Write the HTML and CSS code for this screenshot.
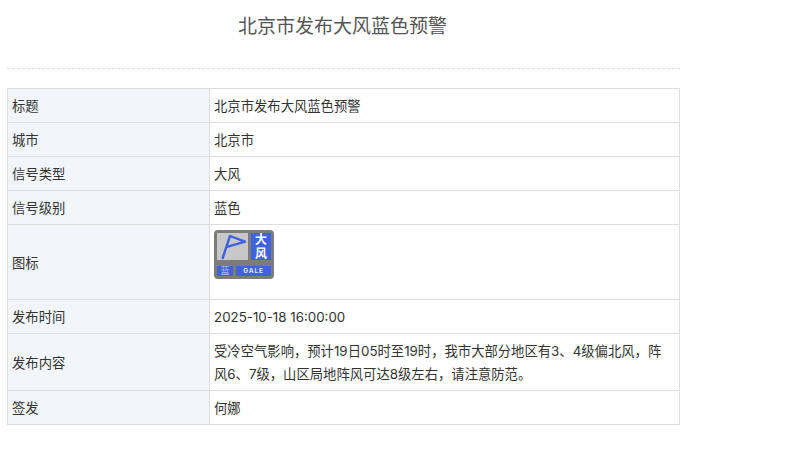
FILE: index.html
```html
<!DOCTYPE html>
<html lang="zh-CN">
<head>
<meta charset="utf-8">
<title>北京市发布大风蓝色预警</title>
<link rel="stylesheet" href="styles.css">
</head>
<body>
<main class="page">
  <h1 class="title">北京市发布大风蓝色预警</h1>
  <table class="info">
    <tr><th>标题</th><td>北京市发布大风蓝色预警</td></tr>
    <tr><th>城市</th><td>北京市</td></tr>
    <tr><th>信号类型</th><td>大风</td></tr>
    <tr><th>信号级别</th><td>蓝色</td></tr>
    <tr class="icon-row"><th>图标</th><td>
      <div class="signal">
        <div class="signal-top">
          <svg class="signal-flag" viewBox="0 0 31 27" width="31" height="27"><path d="M5.7 25 L13 3 L28 8.7 L11 13.7" fill="none" stroke="#3f62e0" stroke-width="2.4" stroke-linejoin="round" stroke-linecap="round"/></svg>
          <div class="signal-name"><span>大</span><span>风</span></div>
        </div>
        <div class="signal-bottom">
          <div class="signal-level">蓝</div>
          <div class="signal-en">GALE</div>
        </div>
      </div>
    </td></tr>
    <tr><th>发布时间</th><td>2025-10-18 16:00:00</td></tr>
    <tr><th>发布内容</th><td>受冷空气影响，预计19日05时至19时，我市大部分地区有3、4级偏北风，阵风6、7级，山区局地阵风可达8级左右，请注意防范。</td></tr>
    <tr><th>签发</th><td>何娜</td></tr>
  </table>
</main>
</body>
</html>
```
FILE: styles.css
```css
html, body { margin: 0; padding: 0; background: #fff; }
body { font-family: "Inter", "Noto Sans CJK SC", sans-serif; color: #333; font-size: 13.33px; }
.page { width: 673px; margin-left: 7px; padding-top: 13px; }
.title {
  margin: 0 0 19px;
  padding-bottom: 23px;
  height: 32px;
  line-height: 28px;
  font-size: 19px;
  font-weight: 400;
  color: #555;
  text-align: center;
  border-bottom: 1px dashed #ddd;
  box-sizing: content-box;
  padding-right: 2px;
}
.info { width: 673px; border-collapse: collapse; table-layout: fixed; }
.info th, .info td {
  border: 1px solid #ddd;
  padding: 6px 11px 4px 4px;
  line-height: 23px;
  font-size: 13.33px;
  font-weight: 400;
  text-align: left;
  color: #333;
}
.info th { width: 186px; background: #f2f5fb; }
.icon-row td { vertical-align: top; height: 64px; padding-top: 5px; padding-bottom: 5px; }
.signal {
  display: flex;
  flex-direction: column;
  gap: 6px;
  width: 54px;
  height: 43px;
  padding: 3px;
  background: #7c7c7c;
  border-radius: 4px;
  box-sizing: content-box;
}
.signal-top { display: flex; gap: 3px; height: 27px; }
.signal-flag { background: #c8c8c8; width: 31px; height: 27px; display: block; }
.signal-name {
  flex: 1;
  display: flex;
  flex-direction: column;
  align-items: center;
  overflow: hidden;
  background: #3f62e0;
  color: #fff;
  font-size: 12px;
  line-height: 13.5px;
  font-weight: 700;
}
.signal-bottom { display: flex; gap: 3px; height: 10px; }
.signal-level, .signal-en {
  background: #3f62e0;
  color: #dfe6ff;
  line-height: 10px;
  text-align: center;
  font-weight: 700;
}
.signal-level { width: 16px; font-size: 9px; font-weight: 400; color: #b9c6f2; }
.signal-en { flex: 1; font-size: 6.5px; letter-spacing: 0.8px; }
```
